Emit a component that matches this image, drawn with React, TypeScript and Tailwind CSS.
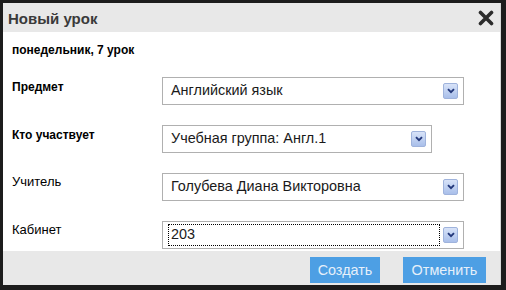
import React from 'react';

const font = { fontFamily: '"Liberation Sans", Arial, sans-serif' };

function Arrow() {
    return (
        <span className="w-[15px] h-[16px] flex items-center justify-center border border-[#9fb3dc] rounded-[2px] bg-gradient-to-b from-[#d8e3f8] to-[#a9bfea] shrink-0">
            <svg width="8" height="6" viewBox="0 0 8 6">
                <path d="M1 1.2 L4 4.2 L7 1.2" fill="none" stroke="#22377a" strokeWidth="1.9" />
            </svg>
        </span>
    );
}

function Select({ value, width, focused }: { value: string; width: string; focused?: boolean }) {
    return (
        <div className={`${width} h-[28px] border border-[#b0b0b0] bg-white flex items-center pl-[5px] pr-[5px]`}>
            <div className={`flex-1 h-[22px] flex items-center pl-[2px] text-[14.4px] text-[#1a1a1a] ${focused ? 'border border-dotted border-black mr-[3px]' : 'border border-transparent'}`}>
                {value}
            </div>
            <Arrow />
        </div>
    );
}

export default function App() {
    const rows = [
        { label: 'Предмет', bold: true, value: 'Английский язык', width: 'w-[302px]' },
        { label: 'Кто участвует', bold: true, value: 'Учебная группа: Англ.1', width: 'w-[270px]' },
        { label: 'Учитель', bold: false, value: 'Голубева Диана Викторовна', width: 'w-[302px]' },
        { label: 'Кабинет', bold: false, value: '203', width: 'w-[302px]', focused: true },
    ];

    return (
        <div className="w-[506px] h-[290px] bg-[#1c1c1c] pl-[3px] pt-[3px] pr-[5px] pb-[5px]" style={font}>
            <div className="w-full h-full flex flex-col border-r border-[#d8d8d8]">
                {/* шапка */}
                <div className="h-[29px] bg-[#e8e8e8] flex items-center justify-between pl-[5px] pr-[6px]">
                    <span className="text-[15px] font-bold text-[#3a3a3a] leading-none pt-[1px]">Новый урок</span>
                    <svg width="16" height="16" viewBox="0 0 16 16" className="mt-[1px]">
                        <path d="M2.5 2.5 L13.5 13.5 M13.5 2.5 L2.5 13.5" stroke="#2b2b2b" strokeWidth="3.6" strokeLinecap="round" />
                    </svg>
                </div>

                {/* форма */}
                <div className="flex-1 bg-white pl-[9px] pt-[10px]">
                    <div className="text-[12px] font-bold text-black leading-[16px]">понедельник, 7 урок</div>
                    <div className="flex flex-col gap-[20px] mt-[19px]">
                        {rows.map((r, i) => (
                            <div key={i} className="flex">
                                <div className={`w-[150px] shrink-0 text-black ${r.bold ? 'text-[12px] font-bold leading-[16px] pt-[2px]' : 'text-[13px] leading-[18px]'}`}>
                                    {r.label}
                                </div>
                                <Select value={r.value} width={r.width} focused={r.focused} />
                            </div>
                        ))}
                    </div>
                </div>

                {/* кнопки */}
                <div className="h-[34px] bg-[#e8e8e8] flex justify-end items-start gap-[23px] pt-[6px] pr-[14px]">
                    <button className="w-[70px] h-[26px] bg-[#4d9fe4] text-[#e6f0fa] text-[14.4px] leading-none">Создать</button>
                    <button className="w-[83px] h-[26px] bg-[#4d9fe4] text-[#e6f0fa] text-[14.4px] leading-none">Отменить</button>
                </div>
            </div>
        </div>
    );
}
